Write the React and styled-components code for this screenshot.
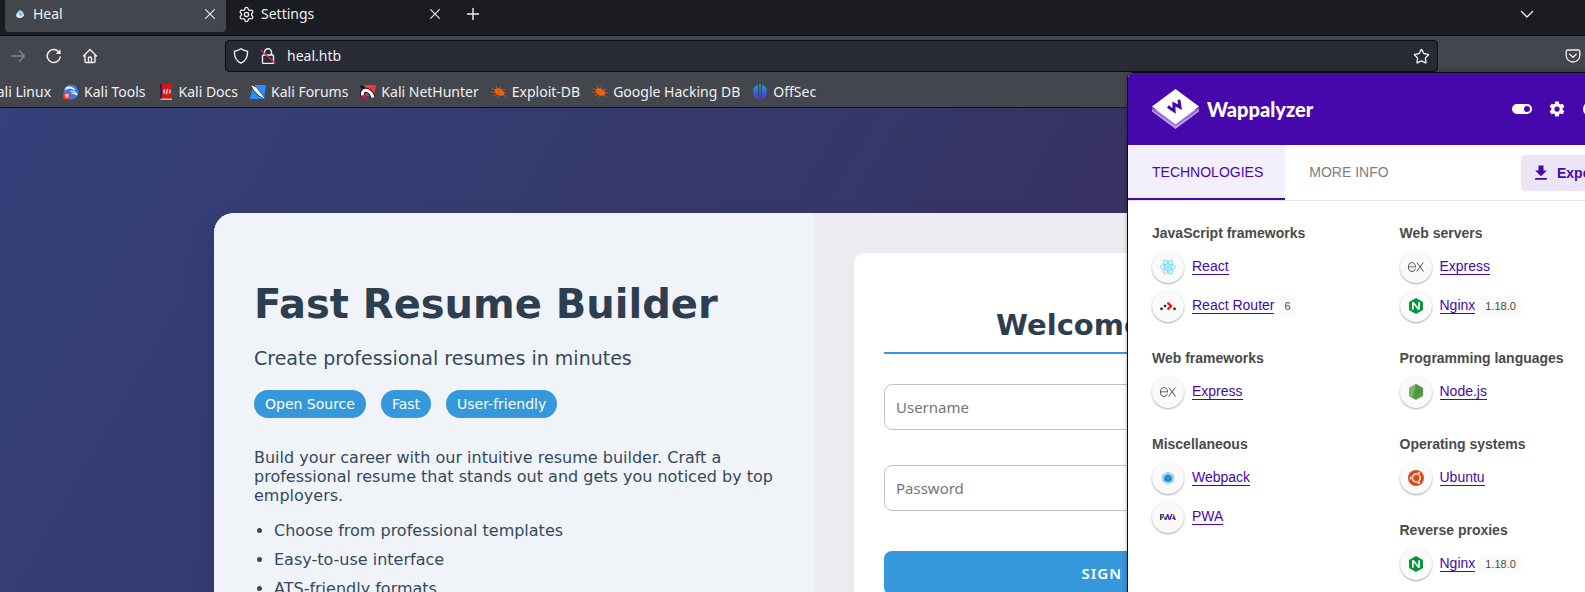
import React from "react";
import styled, { createGlobalStyle } from "styled-components";
import { SiNginx, SiExpress, SiPwa } from "react-icons/si";
import { Star, Settings as Cog } from "lucide-react";

const GlobalStyle = createGlobalStyle`
  *, *::before, *::after { box-sizing: border-box; }
  html, body { margin: 0; height: 100%; overflow: hidden; }
  body { font-family: "Noto Sans", sans-serif; font-size: 14px; }
  button, input { font: inherit; margin: 0; }
  button { cursor: pointer; border: 0; background: none; padding: 0; color: inherit; }
  h1, h2, p, ul { margin: 0; padding: 0; }
  svg { display: block; flex: none; }
`;

const Window = styled.div`
  position: relative;
  display: flex;
  flex-direction: column;
  height: 100vh;
  overflow: hidden;
`;

/* ---- Browser chrome ---- */
const TabStrip = styled.div`
  display: flex;
  align-items: flex-start;
  gap: 4px;
  height: 36px;
  flex: none;
  padding-left: 5px;
  background: #1b1c21;
  border-bottom: 1px solid #111216;
  color: #f0f0f2;
`;
const Tab = styled.div`
  display: flex;
  align-items: center;
  width: 221px;
  height: 32px;
  padding: 0 8px 4px;
  gap: 6px;
  border-radius: 0 0 4px 4px;
  background: ${(p) => (p.$active ? "#44464d" : "transparent")};
`;
const TabTitle = styled.span`
  flex: 1;
  line-height: 20px;
`;
const StripButton = styled.button`
  display: flex;
  align-items: center;
  justify-content: center;
  width: 16px;
  height: 28px;
`;
const NewTab = styled(StripButton)`
  margin-left: 10px;
`;
const AllTabs = styled(StripButton)`
  margin-left: auto;
  margin-right: 50px;
`;
const NavBar = styled.div`
  display: flex;
  align-items: center;
  height: 40px;
  flex: none;
  background: #44464d;
  color: #f0f0f2;
`;
const NavButtons = styled.div`
  display: flex;
  gap: 20px;
  width: 225px;
  padding-left: 10px;
`;
const NavButton = styled.button`
  color: ${(p) => (p.disabled ? "#85868b" : "#f0f0f2")};
`;
const AddressBar = styled.div`
  display: flex;
  flex: 1;
  align-items: center;
  gap: 11px;
  height: 32px;
  padding: 0 7px;
  border: 1px solid #0d0e11;
  border-radius: 4px;
  background: #282a35;
`;
const Address = styled.input`
  flex: 1;
  min-width: 0;
  padding: 0;
  border: 0;
  outline: 0;
  background: none;
  color: #f0f0f2;
  font-size: 14px;
  line-height: 20px;
`;
const NavEnd = styled.div`
  display: flex;
  width: 147px;
  padding-left: 127px;
`;
const Bookmarks = styled.nav`
  display: flex;
  align-items: center;
  gap: 12px;
  height: 32px;
  flex: none;
  margin-left: -12px;
  background: #44464d;
  border-bottom: 1px solid #111216;
`;
const Bookmark = styled.a`
  display: flex;
  align-items: center;
  gap: 5px;
  color: #f0f0f2;
  line-height: 20px;
  text-decoration: none;
  white-space: nowrap;
`;

/* ---- Heal page ---- */
const Page = styled.main`
  display: flex;
  flex: 1;
  justify-content: center;
  align-items: flex-start;
  width: calc(100% + 43px);
  min-height: 0;
  padding: 105px 20px 0;
  background: linear-gradient(120deg, #34417a 0%, #363769 45%, #3a2d5e 75%);
  font-family: "DejaVu Sans", sans-serif;
  color: #34495e;
`;
const Card = styled.section`
  display: grid;
  grid-template-columns: 1fr 1fr;
  width: 100%;
  max-width: 1200px;
  border-radius: 20px;
  overflow: hidden;
  background: #ebebf0;
  box-shadow: 0 15px 30px rgba(0, 0, 0, 0.1);
`;
const Intro = styled.div`
  padding: 68px 40px 40px;
  background: #f0f3f8;
`;
const Title = styled.h1`
  color: #2c3e50;
  font-size: 40px;
  line-height: 47px;
`;
const Subtitle = styled.p`
  margin-top: 18px;
  font-size: 19px;
  line-height: 24px;
`;
const Tags = styled.div`
  display: flex;
  gap: 15px;
  margin-top: 20px;
`;
const Tag = styled.span`
  padding: 0 11px;
  border-radius: 14px;
  background: #3498db;
  color: #fff;
  font-size: 14px;
  line-height: 28px;
`;
const Lead = styled.p`
  margin-top: 30px;
  font-size: 16px;
  line-height: 19px;
`;
const Features = styled.ul`
  margin-top: 16px;
  padding-left: 20px;
  font-size: 16px;
  line-height: 19px;
  li { margin-bottom: 10px; }
`;
const FormPane = styled.div`
  padding: 40px;
`;
const Form = styled.form`
  padding: 54px 30px 30px;
  border-radius: 10px;
  background: #fff;
`;
const FormTitle = styled.h2`
  margin-bottom: 30px;
  padding-bottom: 9px;
  border-bottom: 2px solid #3498db;
  color: #2c3e50;
  font-size: 29px;
  line-height: 36px;
  text-align: center;
`;
const Field = styled.input`
  display: block;
  width: 100%;
  height: 46px;
  margin-bottom: 35px;
  padding: 0 11px;
  border: 1px solid #bdc3c7;
  border-radius: 8px;
  background: #fff;
  font-family: "Noto Sans", sans-serif;
  font-size: 15px;
  &::placeholder { color: #757575; opacity: 1; }
`;
const Submit = styled.button`
  width: 100%;
  height: 44px;
  margin-top: 5px;
  border-radius: 8px;
  background: #3498db;
  color: #fff;
  font-family: "Noto Sans", sans-serif;
  font-size: 15px;
  font-weight: 600;
  letter-spacing: 1px;
`;

/* ---- Wappalyzer popup ---- */
const Popup = styled.aside`
  position: absolute;
  top: 72px;
  right: -63px;
  bottom: -10px;
  width: 521px;
  overflow: hidden;
  border: 1px solid #0c0c0d;
  border-radius: 6px;
  background: #fff;
  box-shadow: 0 0 4px rgba(0, 0, 0, 0.3);
  font-family: "Liberation Sans", Arial, sans-serif;
  color: #4a4a4a;
`;
const PopupHeader = styled.header`
  display: flex;
  align-items: center;
  height: 72px;
  padding: 0 24px;
  background: #4608ad;
  color: #fff;
`;
const Brand = styled.span`
  flex: 1;
  margin-left: 8px;
  font-family: Lato, sans-serif;
  font-size: 20px;
  font-weight: 900;
  line-height: 24px;
`;
const HeaderTools = styled.div`
  display: flex;
  align-items: center;
  gap: 16px;
  width: 111px;
  flex: none;
`;
const PopupTabs = styled.div`
  display: flex;
  height: 56px;
  padding-right: 24px;
  border-bottom: 1px solid #e4e4e6;
`;
const PopupTab = styled.button`
  padding: 0 22px 0 24px;
  border-bottom: 2px solid ${(p) => (p.$active ? "#4608ad" : "transparent")};
  background: ${(p) => (p.$active ? "#f4f0fb" : "transparent")};
  color: ${(p) => (p.$active ? "#4608ad" : "#7d7d7d")};
  font-size: 14px;
  line-height: 20px;
`;
const ExportButton = styled.button`
  display: flex;
  align-items: center;
  gap: 6px;
  width: 102px;
  height: 36px;
  margin: 10px 0 0 auto;
  padding-left: 10px;
  border-radius: 4px;
  background: #ece5f6;
  color: #4608ad;
  font-size: 14px;
  font-weight: 700;
`;
const Columns = styled.div`
  display: grid;
  grid-template-columns: 1fr 1fr;
  padding: 21px 0 0 24px;
`;
const Category = styled.section`
  margin-bottom: 25px;
`;
const CategoryTitle = styled.h2`
  margin-bottom: 7px;
  font-size: 14px;
  line-height: 22px;
`;
const TechList = styled.div`
  display: grid;
  gap: 7px;
`;
const TechRow = styled.div`
  display: flex;
  align-items: center;
  height: 32px;
`;
const TechIcon = styled.span`
  display: flex;
  align-items: center;
  justify-content: center;
  width: 32px;
  height: 32px;
  margin-right: 8px;
  border-radius: 50%;
  background: #fafafa;
  box-shadow: 0 1px 2px rgba(0, 0, 0, 0.35);
`;
const TechLink = styled.a`
  border-bottom: 1px solid #4608ad;
  color: #4608ad;
  font-size: 14px;
  line-height: 15px;
  text-decoration: none;
`;
const Version = styled.span`
  margin-left: 5px;
  padding: 0 5px;
  border-radius: 3px;
  background: #fafafa;
  font-size: 11px;
  line-height: 20px;
`;

const Line = ({ size = 16, children, width = 1.3 }) => (
  <svg width={size} height={size} viewBox="0 0 16 16" fill="none" stroke="currentColor"
    strokeWidth={width} strokeLinecap="round" strokeLinejoin="round">{children}</svg>
);
const CloseIcon = () => <Line size={14} width={1.3}><path d="M3 3l10 10M13 3L3 13" /></Line>;
const PlusIcon = () => <Line width={1.4}><path d="M8 2.500v11M2.500 8h11" /></Line>;
const ChevronIcon = () => <Line><path d="M2.500 5.500L8 11l5.500-5.500" /></Line>;
const ForwardIcon = () => <Line><path d="M1.500 8h13M9.500 3l5 5-5 5" /></Line>;
const ReloadIcon = () => (
  <Line width={1.500}><path d="M14.200 9a6.500 6.500 0 1 1-1.800-5.500l1.600 1.700" /><path d="M14.500 1.200v4.800H9.700z" fill="currentColor" stroke="none" /></Line>
);
const HomeIcon = () => (
  <Line width={1.400}><path d="M1.500 8L8 1.500 14.500 8M3 7v6.500a1 1 0 0 0 1 1h8a1 1 0 0 0 1-1V7M6.500 14.500V10a1 1 0 0 1 1-1h1a1 1 0 0 1 1 1v4.500" /></Line>
);
const ShieldIcon = () => (
  <Line width={1.400}><path d="M8 .8c2 1.400 4 2.200 6.500 2.400.400 5.500-1.700 9.700-6.500 12C3.200 12.900 1.100 8.700 1.500 3.200 4 3 6 2.200 8 .8z" /></Line>
);
const LockIcon = () => (
  <Line width={1.400}>
    <path d="M4.500 7V4.200a3.500 3.500 0 0 1 7 0V7M3.500 7h9a1 1 0 0 1 1 1v6.500a1 1 0 0 1-1 1h-9a1 1 0 0 1-1-1V8a1 1 0 0 1 1-1z" />
    <path d="M1 2.500l14 12.500" stroke="#e0264f" />
  </Line>
);
const PocketIcon = () => (
  <Line><path d="M2.500 2h11a1.300 1.300 0 0 1 1.300 1.300V7.500a6.800 6.500 0 0 1-13.600 0V3.300A1.300 1.300 0 0 1 2.500 2zM4.800 6.200L8 9.200l3.200-3" /></Line>
);
const HealIcon = () => (
  <svg width="14" height="14" viewBox="0 0 14 14">
    <path d="M6.500 3c2 0 4.500 2.500 4.500 5 0 2-2 3-4 3s-4-.500-4-2.500S5 5 6.500 3z" fill="#9fd0f5" />
    <path d="M6 4l-2.500 5L7 11l4-2.500" fill="#eef7fd" /><path d="M6.500 4L10 8l-3 1.500L5.500 7z" fill="#7fbdf0" />
  </svg>
);

const DragonIcon = () => (
  <svg width="16" height="16" viewBox="0 0 16 16">
    <circle cx="8" cy="8" r="7.500" fill="#367bf0" />
    <path d="M2 5.500c3-2 7-2 10 .5M3 3.500c3-1 5-1 8 1.500M7.500 7.500c3-.8 5 .2 6.500 3.500-2-2-3.500-2-5.500-1.500" stroke="#fff" strokeWidth="1.100" fill="none" />
    <circle cx="3.800" cy="12" r="3.700" fill="#e53838" />
    <path d="M2 10.700h3.500M3 10.700v3M4.900 10.700v3" stroke="#fff" strokeWidth=".9" />
  </svg>
);
const DocsIcon = () => (
  <svg width="16" height="16" viewBox="0 0 16 16">
    <path d="M2 0h12v15H2z" fill="#d91418" /><path d="M2 0h2v15H2z" fill="#1f2b52" /><path d="M2 14.500h12V16H3z" fill="#c9b8b8" />
    <path d="M7 5.500L5.500 7.500 7 9.300M11 5.500l1.500 2L11 9.300M9.500 4.800l-1.100 5.400" stroke="#fff" strokeWidth="1.100" fill="none" />
  </svg>
);
const ForumsIcon = () => (
  <svg width="16" height="16" viewBox="0 0 16 16">
    <path d="M3 1h13l-2 14H0l2-9z" fill="#2b8bff" /><path d="M0 0l5 2 6 7 5 6.500-7-3-6-6z" fill="#1b2742" />
    <path d="M1 1l5 2.500 5 6 4 5.500-6-3.500-5-5z" fill="#fff" />
  </svg>
);
const NetHunterIcon = () => (
  <svg width="16" height="16" viewBox="0 0 16 16">
    <path d="M4 1h12l-2 11H3z" fill="#f1363f" /><path d="M0 1l6 2-5 2z" fill="#14171e" />
    <path d="M3.500 13C1 8.500 3.500 5.500 7 6.500s5 3.500 6 7" stroke="#14171e" strokeWidth="5" fill="none" />
    <path d="M3.500 13C1 8.500 3.500 5.500 7 6.500s5 3.500 6 7" stroke="#fff" strokeWidth="3" fill="none" />
    <path d="M1 12l3.500-1.500 2 3.500-3 2z" fill="#c0164c" />
  </svg>
);
const BugIcon = () => (
  <svg width="16" height="16" viewBox="0 0 16 16">
    <ellipse cx="8.500" cy="8" rx="5" ry="3.200" transform="rotate(30 8.500 8)" fill="#f0610e" />
    <path d="M1 4.500l4 2M5 2.500l1.500 3M9 3.500v2.500M11 6l3-.5M13 9h2.500M12 10.500l2.500 2M.5 8l4.500.5M3 11.500l3.500-1.500M7 13l1.500-2" stroke="#f0610e" strokeWidth=".7" strokeLinecap="round" />
  </svg>
);
const OffSecIcon = () => (
  <svg width="16" height="16" viewBox="0 0 16 16">
    <defs><linearGradient id="offsec" x1="0" y1="0" x2="0" y2="1"><stop offset="0" stopColor="#0fb0c0" /><stop offset=".5" stopColor="#3566d6" /><stop offset="1" stopColor="#6a23d0" /></linearGradient></defs>
    <path d="M6 1v14C2.500 14 1 11 1 8s1.500-6 5-7zM7.300 0h1.400v16H7.300zM10 1c3.500 1 5 4 5 7s-1.500 6-5 7z" fill="url(#offsec)" />
  </svg>
);

const WappalyzerLogo = () => (
  <svg width="47" height="40" viewBox="0 0 47 40">
    <path d="M0 22.500L23.500 40 47 22.500v-2H0z" fill="#b9a0e4" />
    <path d="M0 18.500L23.500 36 47 18.500v2.500L23.500 37 0 21z" fill="#8f68d2" />
    <path d="M23.500 0L47 17.500 23.500 35 0 17.500z" fill="#fff" />
    <path d="M17 13.500l3 7 3.500-6 3.500 6 3-7" transform="rotate(-32 23.500 17.500)" stroke="#4608ad" strokeWidth="3" fill="none" />
  </svg>
);
const ToggleIcon = () => (
  <svg width="20" height="24" viewBox="2 0 20 24" fill="currentColor"><path d="M17 7H7a5 5 0 0 0 0 10h10a5 5 0 0 0 0-10m0 8a3 3 0 1 1 0-6 3 3 0 0 1 0 6" /></svg>
);
const GearIcon = () => (
  <svg width="18" height="18" viewBox="0 0 24 24" fill="currentColor"><path d="M12 15.500A3.500 3.500 0 0 1 8.500 12 3.500 3.500 0 0 1 12 8.500a3.500 3.500 0 0 1 3.500 3.500 3.500 3.500 0 0 1-3.500 3.500m7.430-2.530c.04-.32.07-.64.07-.97s-.03-.66-.07-1l2.110-1.630c.19-.15.24-.42.12-.64l-2-3.460c-.12-.22-.39-.31-.61-.22l-2.490 1c-.52-.39-1.060-.73-1.690-.98l-.37-2.650A.506.506 0 0 0 14 2h-4c-.25 0-.46.18-.5.42l-.37 2.650c-.63.25-1.170.59-1.690.98l-2.490-1c-.22-.09-.49 0-.61.22l-2 3.460c-.13.22-.07.49.12.64L4.570 11c-.04.34-.07.67-.07 1s.03.65.07.97l-2.110 1.660c-.19.15-.25.42-.12.64l2 3.460c.12.22.39.3.61.22l2.490-1.010c.52.4 1.060.74 1.690.99l.37 2.650c.04.24.25.42.5.42h4c.25 0 .46-.18.5-.42l.37-2.650c.63-.26 1.170-.59 1.690-.99l2.490 1.010c.22.08.49 0 .61-.22l2-3.460c.12-.22.07-.49-.12-.64z" /></svg>
);
const ContrastIcon = () => (
  <svg width="18" height="18" viewBox="0 0 18 18"><circle cx="9" cy="9" r="7" fill="none" stroke="currentColor" strokeWidth="2" /><path d="M9 2a7 7 0 0 1 0 14z" fill="currentColor" /></svg>
);
const DownloadIcon = () => (
  <svg width="20" height="20" viewBox="0 0 24 24" fill="currentColor"><path d="M5 20h14v-2H5m14-9h-4V3H9v6H5l7 7z" /></svg>
);

const ReactLogo = () => (
  <svg width="16" height="16" viewBox="0 0 16 16" fill="none" stroke="#61dafb" strokeWidth=".9">
    <ellipse cx="8" cy="8" rx="7.500" ry="2.900" /><ellipse cx="8" cy="8" rx="7.500" ry="2.900" transform="rotate(60 8 8)" />
    <ellipse cx="8" cy="8" rx="7.500" ry="2.900" transform="rotate(120 8 8)" /><circle cx="8" cy="8" r="1.400" fill="#61dafb" stroke="none" />
  </svg>
);
const RouterLogo = () => (
  <svg width="16" height="16" viewBox="0 0 16 16">
    <g fill="#2b2b2b"><circle cx="1.500" cy="10.800" r="1.400" /><circle cx="5" cy="8" r="1.300" /><circle cx="14.500" cy="10.800" r="1.400" /></g>
    <path d="M8.200 5.300L11.300 8 8.200 10.800" stroke="#f01418" strokeWidth="2.300" strokeLinecap="round" strokeLinejoin="round" fill="none" />
  </svg>
);
const NodeLogo = () => (
  <svg width="16" height="16" viewBox="0 0 16 16">
    <path d="M8 0l7 4v8l-7 4-7-4V4z" fill="#5aa048" /><path d="M8 0L1 4v8l3 1.800z" fill="#79b866" /><path d="M8 0l7 4v4L6 15z" fill="#4d8f43" opacity=".6" />
  </svg>
);
const WebpackLogo = () => (
  <svg width="16" height="16" viewBox="0 0 16 16">
    <path d="M8 1.500l6 3.300v6.500l-6 3.300-6-3.300V4.800z" fill="#8ed6fb" />
    <path d="M8 4.500l3.600 2v3.800L8 12.300l-3.600-2V6.500z" fill="#1c78c0" /><path d="M4.400 6.500L8 8.400l3.600-1.900M8 8.400v3.900" stroke="#8ed6fb" strokeWidth=".5" fill="none" />
  </svg>
);
const UbuntuLogo = () => (
  <svg width="16" height="16" viewBox="0 0 16 16">
    <circle cx="8" cy="8" r="8" fill="#dd4814" />
    <circle cx="8.300" cy="8" r="3.900" fill="none" stroke="#fff" strokeWidth="1.500" />
    <g fill="#fff" stroke="#dd4814" strokeWidth=".7">
      <circle cx="2.800" cy="8" r="1.500" /><circle cx="10.800" cy="3.300" r="1.500" /><circle cx="10.800" cy="12.700" r="1.500" />
    </g>
  </svg>
);
const PwaLogo = () => (
  <svg width="16" height="16" viewBox="0 0 16 16">
    <defs><linearGradient id="pwa"><stop offset=".3" stopColor="#3d3d3d" /><stop offset=".3" stopColor="#5a0fc8" /><stop offset=".72" stopColor="#5a0fc8" /><stop offset=".72" stopColor="#3d3d3d" /></linearGradient></defs>
    <SiPwa size={16} fill="url(#pwa)" />
  </svg>
);

const bookmarks = [
  ["Kali Linux", null],
  ["Kali Tools", DragonIcon],
  ["Kali Docs", DocsIcon],
  ["Kali Forums", ForumsIcon],
  ["Kali NetHunter", NetHunterIcon],
  ["Exploit-DB", BugIcon],
  ["Google Hacking DB", BugIcon],
  ["OffSec", OffSecIcon],
];

const express = { name: "Express", icon: <SiExpress size={16} color="#333" /> };
const nginx = { name: "Nginx", version: "1.18.0", icon: <SiNginx size={16} color="#009639" /> };
const columns = [
  [
    ["JavaScript frameworks", [{ name: "React", icon: <ReactLogo /> }, { name: "React Router", version: "6", icon: <RouterLogo /> }]],
    ["Web frameworks", [express]],
    ["Miscellaneous", [{ name: "Webpack", icon: <WebpackLogo /> }, { name: "PWA", icon: <PwaLogo /> }]],
  ],
  [
    ["Web servers", [express, nginx]],
    ["Programming languages", [{ name: "Node.js", icon: <NodeLogo /> }]],
    ["Operating systems", [{ name: "Ubuntu", icon: <UbuntuLogo /> }]],
    ["Reverse proxies", [nginx]],
  ],
];

export default function App() {
  return (
    <Window>
      <GlobalStyle />
      <TabStrip>
        <Tab $active>
          <HealIcon />
          <TabTitle>Heal</TabTitle>
          <StripButton aria-label="Close Heal"><CloseIcon /></StripButton>
        </Tab>
        <Tab>
          <Cog size={17} strokeWidth={1.800} />
          <TabTitle>Settings</TabTitle>
          <StripButton aria-label="Close Settings"><CloseIcon /></StripButton>
        </Tab>
        <NewTab aria-label="New tab"><PlusIcon /></NewTab>
        <AllTabs aria-label="List all tabs"><ChevronIcon /></AllTabs>
      </TabStrip>
      <NavBar>
        <NavButtons>
          <NavButton aria-label="Forward" disabled><ForwardIcon /></NavButton>
          <NavButton aria-label="Reload"><ReloadIcon /></NavButton>
          <NavButton aria-label="Home"><HomeIcon /></NavButton>
        </NavButtons>
        <AddressBar>
          <ShieldIcon />
          <LockIcon />
          <Address aria-label="Address" defaultValue="heal.htb" />
          <NavButton aria-label="Bookmark this page"><Star size={17} strokeWidth={1.900} /></NavButton>
        </AddressBar>
        <NavEnd>
          <NavButton aria-label="Save to Pocket"><PocketIcon /></NavButton>
        </NavEnd>
      </NavBar>
      <Bookmarks>
        {bookmarks.map(([label, Icon]) => (
          <Bookmark href="#" key={label}>{Icon && <Icon />}{label}</Bookmark>
        ))}
      </Bookmarks>

      <Page>
        <Card>
          <Intro>
            <Title>Fast Resume Builder</Title>
            <Subtitle>Create professional resumes in minutes</Subtitle>
            <Tags>
              <Tag>Open Source</Tag>
              <Tag>Fast</Tag>
              <Tag>User-friendly</Tag>
            </Tags>
            <Lead>
              Build your career with our intuitive resume builder. Craft a professional resume that
              stands out and gets you noticed by top employers.
            </Lead>
            <Features>
              <li>Choose from professional templates</li>
              <li>Easy-to-use interface</li>
              <li>ATS-friendly formats</li>
            </Features>
          </Intro>
          <FormPane>
            <Form onSubmit={(e) => e.preventDefault()}>
              <FormTitle>Welcome Back</FormTitle>
              <Field aria-label="Username" placeholder="Username" />
              <Field aria-label="Password" type="password" placeholder="Password" />
              <Submit>SIGN IN</Submit>
            </Form>
          </FormPane>
        </Card>
      </Page>

      <Popup>
        <PopupHeader>
          <WappalyzerLogo />
          <Brand>Wappalyzer</Brand>
          <HeaderTools>
            <button aria-label="Toggle"><ToggleIcon /></button>
            <button aria-label="Settings"><GearIcon /></button>
            <button aria-label="Theme"><ContrastIcon /></button>
          </HeaderTools>
        </PopupHeader>
        <PopupTabs>
          <PopupTab $active>TECHNOLOGIES</PopupTab>
          <PopupTab>MORE INFO</PopupTab>
          <ExportButton><DownloadIcon />Export</ExportButton>
        </PopupTabs>
        <Columns>
          {columns.map((categories, i) => (
            <div key={i}>
              {categories.map(([title, items]) => (
                <Category key={title}>
                  <CategoryTitle>{title}</CategoryTitle>
                  <TechList>
                    {items.map((t) => (
                      <TechRow key={t.name}>
                        <TechIcon>{t.icon}</TechIcon>
                        <TechLink href="#">{t.name}</TechLink>
                        {t.version && <Version>{t.version}</Version>}
                      </TechRow>
                    ))}
                  </TechList>
                </Category>
              ))}
            </div>
          ))}
        </Columns>
      </Popup>
    </Window>
  );
}
